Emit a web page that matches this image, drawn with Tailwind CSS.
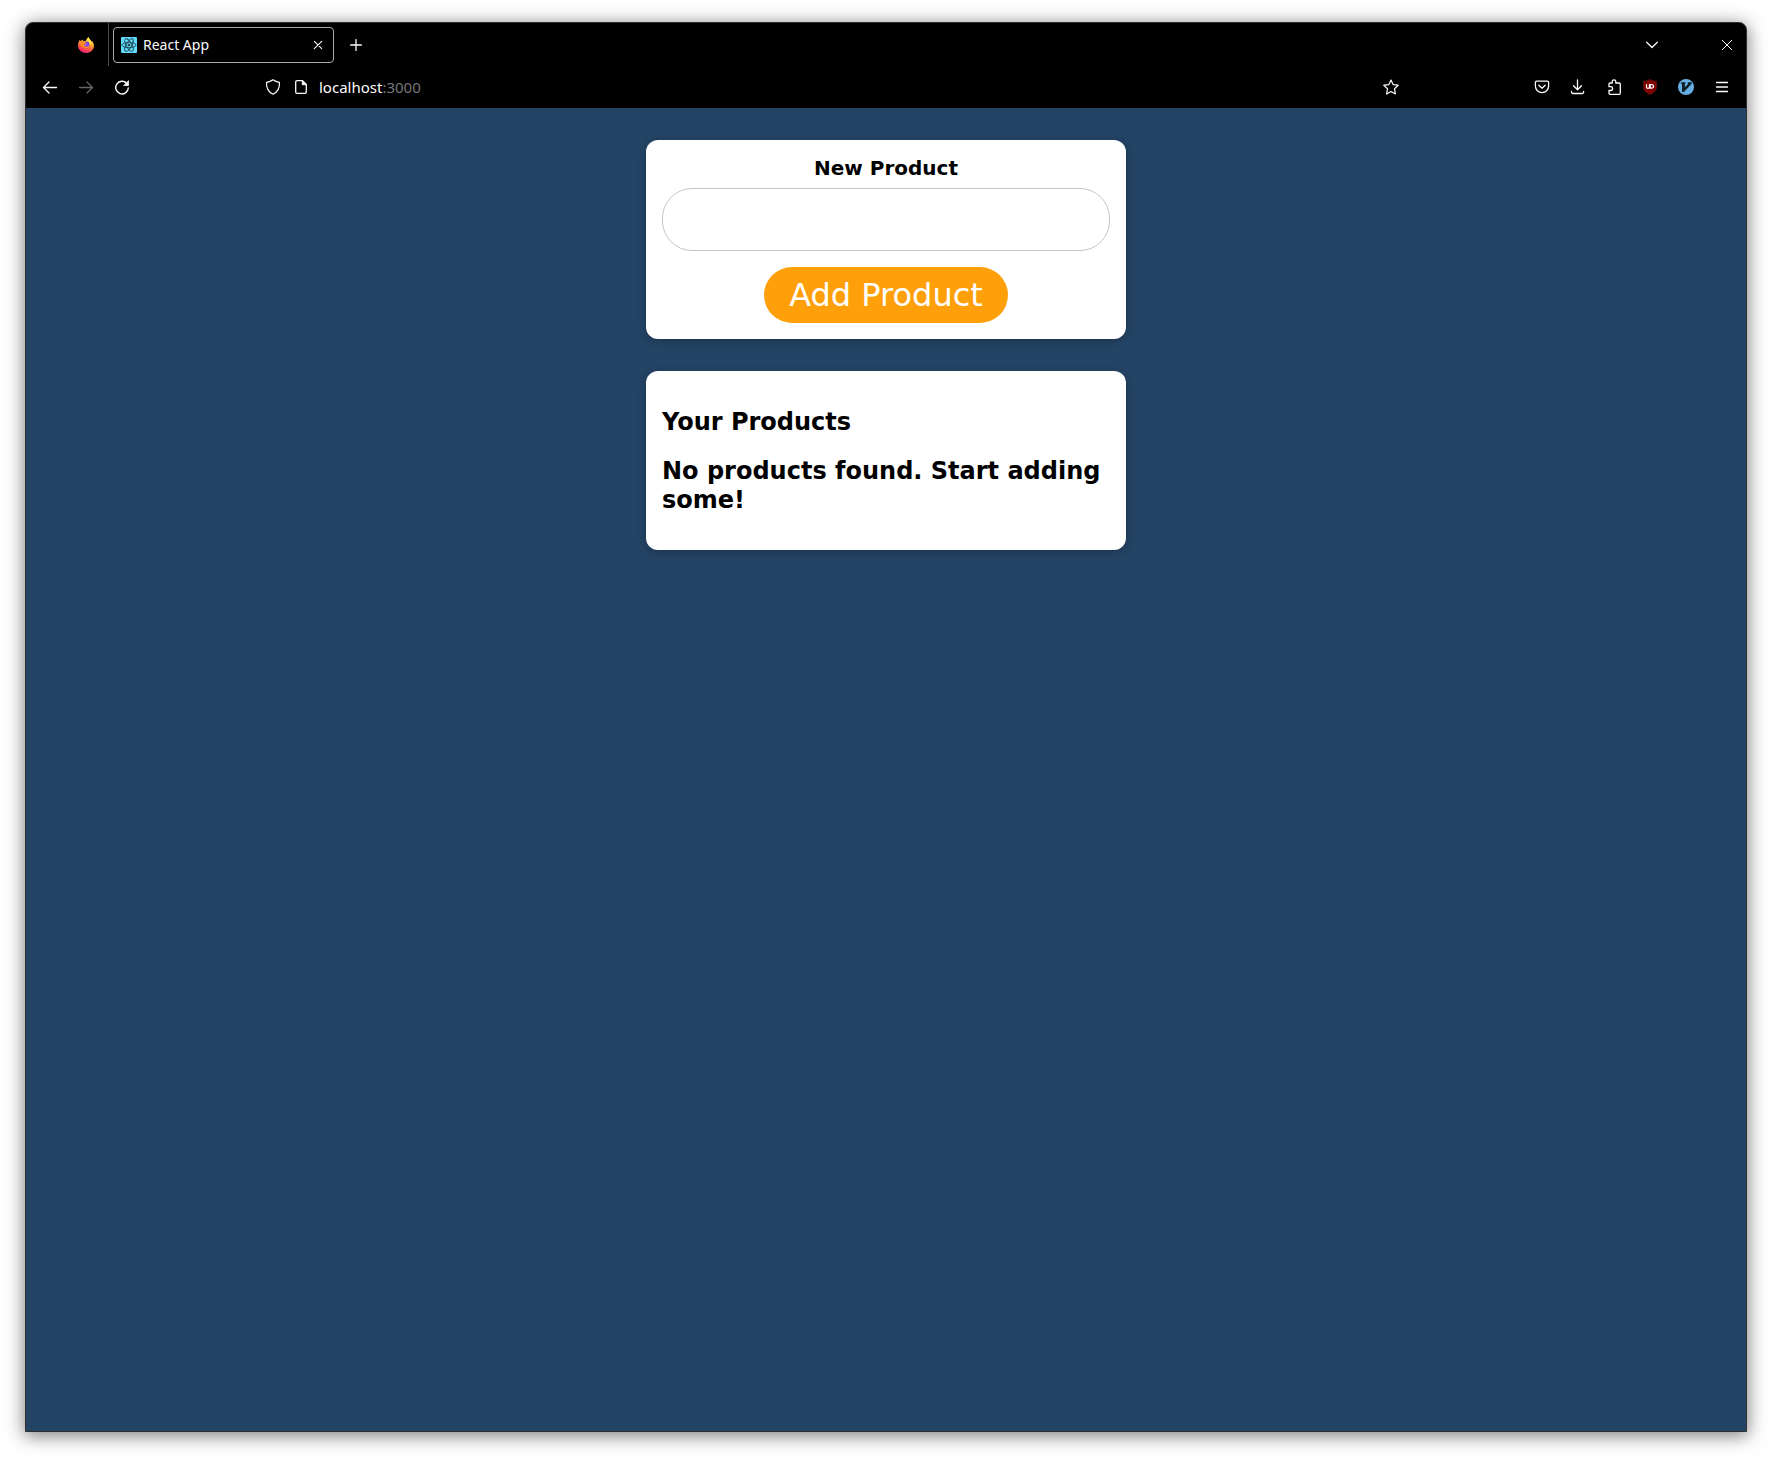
<!DOCTYPE html>
<html lang="en">
<head>
<meta charset="utf-8">
<meta name="viewport" content="width=device-width, initial-scale=1">
<title>React App</title>
<script src="https://cdn.jsdelivr.net/npm/@tailwindcss/browser@4"></script>
</head>
<body class="flex min-h-screen flex-col bg-white px-[25px] pt-[22px] pb-7 font-['Noto_Sans',sans-serif]">
<div class="flex flex-1 flex-col overflow-hidden rounded-t-lg border border-[#303030] bg-[#244465] shadow-[0_3px_18px_1px_rgba(0,0,0,0.5)]">

  <header class="bg-black text-[#fbfbfe]">
    <!-- Tab strip -->
    <div class="flex h-[43px] items-center">
      <button type="button" aria-label="Firefox View" class="flex h-full w-[83px] items-center justify-end border-r border-[#4a4a4a] pr-3.5">
        <svg class="size-4" viewBox="0 0 16 16">
          <defs>
            <linearGradient id="fire" x1="0.8" y1="0" x2="0.4" y2="1">
              <stop offset="0" stop-color="#fff44f"/><stop offset=".4" stop-color="#ffb030"/><stop offset=".7" stop-color="#ff5a3c"/><stop offset="1" stop-color="#e81a80"/>
            </linearGradient>
            <radialGradient id="globe"><stop offset="0" stop-color="#a05bff"/><stop offset="1" stop-color="#6a35d8"/></radialGradient>
          </defs>
          <path d="M1.800 3 3 4.300 4.400 2.600 5.500 4.200 8.200 3.500C8.400 2 9.300.8 10.600 0c.1 1.400 1 2.300 2.200 3.200l.6 1.200.5-.5c1.300 1.400 2.100 3 2.100 4.800C16 12.700 12.400 16 8 16S0 12.600 0 8.500C0 6.500.7 4.700 1.800 3z" fill="url(#fire)"/>
          <circle cx="8.200" cy="7.900" r="3.300" fill="url(#globe)"/>
          <path d="M1.400 5.300c1.500-1.500 4.200-1.300 5.400 0 .8.100 1.600.1 1.600.6-.1.800-1.700 1-2 1.900-.2 1.500 1 2.200 2.300 1.900 1.100-.2 1.700-1 2.900-.4-.8 1.800-3.600 2.700-5.800 1.400C3.100 10 3.200 8 1.400 5.300z" fill="#ff8a25"/>
          <path d="M8.600 3.700c2.300.5 3.500 2.300 3.200 4.500 1.200-.9 1.700-2.600.9-4.300L10.600.3z" fill="#ffe14a"/>
        </svg>
      </button>
      <div class="ml-1 flex h-9 w-[221px] items-center rounded-sm border border-[#a9a9ae] pr-[5px] pl-[7px]">
        <svg class="size-4 shrink-0" viewBox="0 0 16 16" fill="none" stroke="#1d4350" stroke-width=".9">
          <rect width="16" height="16" rx="1" fill="#61dafb" stroke="none"/>
          <ellipse cx="8" cy="8" rx="7" ry="2.700"/>
          <ellipse cx="8" cy="8" rx="7" ry="2.700" transform="rotate(60 8 8)"/>
          <ellipse cx="8" cy="8" rx="7" ry="2.700" transform="rotate(120 8 8)"/>
          <circle cx="8" cy="8" r="1.300" fill="#1d4350" stroke="none"/>
        </svg>
        <span class="ml-1.5 flex-1 text-sm">React App</span>
        <button type="button" aria-label="Close tab" class="flex size-5 items-center justify-center">
          <svg class="size-2.5" viewBox="0 0 10 10" stroke="currentColor" stroke-linecap="round" stroke-width="1.100"><path d="m1.300 1.300 7.400 7.400M8.700 1.300 1.300 8.700"/></svg>
        </button>
      </div>
      <button type="button" aria-label="New tab" class="ml-1 flex h-9 w-9 items-center justify-center">
        <svg class="size-3" viewBox="0 0 12 12" stroke="currentColor" stroke-linecap="round" stroke-width="1.300"><path d="M6 .6v10.800M.6 6h10.800"/></svg>
      </button>
      <div class="flex-1"></div>
      <button type="button" aria-label="List all tabs" class="mr-[38px] flex h-9 w-9 items-center justify-center">
        <svg class="size-3" viewBox="0 0 12 12" fill="none" stroke="currentColor" stroke-linecap="round" stroke-linejoin="round" stroke-width="1.300"><path d="m.7 3.200 5.300 5.300 5.300-5.300"/></svg>
      </button>
      <button type="button" aria-label="Close window" class="flex h-9 w-[38px] items-center justify-center">
        <svg class="size-2.5" viewBox="0 0 10 10" stroke="currentColor" stroke-width="1"><path d="m0 0 10 10M10 0 0 10"/></svg>
      </button>
    </div>

    <!-- Navigation toolbar -->
    <nav class="flex h-[42px] items-center px-1.5">
      <button type="button" aria-label="Back" class="flex h-9 w-9 items-center justify-center">
        <svg class="size-4" viewBox="0 0 16 16" fill="none" stroke="currentColor" stroke-width="1.300" stroke-linecap="round" stroke-linejoin="round"><path d="M14.500 8.500h-13M7 3 1.500 8.500 7 14"/></svg>
      </button>
      <button type="button" aria-label="Forward" disabled class="flex h-9 w-9 items-center justify-center text-[#66666a]">
        <svg class="size-4" viewBox="0 0 16 16" fill="none" stroke="currentColor" stroke-width="1.300" stroke-linecap="round" stroke-linejoin="round"><path d="M1.500 8.500h13M9 3l5.500 5.500L9 14"/></svg>
      </button>
      <button type="button" aria-label="Reload" class="flex h-9 w-9 items-center justify-center">
        <svg class="size-4" viewBox="0 0 16 16" fill="none" stroke="currentColor" stroke-width="1.400" stroke-linecap="round" stroke-linejoin="round"><path d="M12.800 4.500A6.300 6.300 0 1 0 14.300 9"/><path d="M14.500 2v4.500H10z" fill="currentColor" stroke-width=".8"/></svg>
      </button>

      <div class="mx-[119px] flex flex-1 items-center">
        <button type="button" aria-label="Tracking protection" class="flex h-7 w-7 items-center justify-center">
          <svg class="size-4" viewBox="0 0 16 16" fill="none" stroke="currentColor" stroke-width="1.200" stroke-linejoin="round"><path d="M8 .8c1.900 1.400 3.800 2.100 6.400 2.500.5 5.200-1.200 9.400-6.400 12C2.800 12.700 1.100 8.500 1.600 3.300 4.200 2.900 6.100 2.200 8 .8z"/></svg>
        </button>
        <button type="button" aria-label="Site information" class="flex h-7 w-7 items-center justify-center">
          <svg class="size-4" viewBox="0 0 16 16" fill="none" stroke="currentColor" stroke-width="1.300" stroke-linejoin="round"><path d="M9.500 1.700H4a1.300 1.300 0 0 0-1.300 1.300v10A1.300 1.300 0 0 0 4 14.300h8a1.300 1.300 0 0 0 1.300-1.300V5.500z"/><path d="M9.300 1.700v4h4z" fill="currentColor" stroke-width="1"/></svg>
        </button>
        <a href="http://localhost:3000" class="ml-1 flex-1 text-[15px] leading-5">localhost<span class="text-[#76767a]">:3000</span></a>
        <button type="button" aria-label="Bookmark this page" class="flex h-7 w-7 items-center justify-center">
          <svg class="size-4" viewBox="0 0 16 16" fill="none" stroke="currentColor" stroke-width="1.200" stroke-linejoin="round"><path d="m8 1 2.100 4.600 5.100.6-3.700 3.500.9 5.300L8 12.400 3.600 15l.9-5.300L.8 6.200l5.100-.6z"/></svg>
        </button>
      </div>

      <button type="button" aria-label="Save to Pocket" class="flex h-9 w-9 items-center justify-center">
        <svg class="size-4" viewBox="0 0 16 16" fill="none" stroke="currentColor" stroke-width="1.300" stroke-linecap="round" stroke-linejoin="round"><path d="M2.700 2.200h10.600a1.300 1.300 0 0 1 1.300 1.300v3.600a6.600 6.600 0 0 1-13.200 0V3.500a1.300 1.300 0 0 1 1.300-1.300z"/><path d="M4.800 6.300 8 9.300l3.200-3"/></svg>
      </button>
      <button type="button" aria-label="Downloads" class="flex h-9 w-9 items-center justify-center">
        <svg class="size-4" viewBox="0 0 16 16" fill="none" stroke="currentColor" stroke-width="1.300" stroke-linecap="round" stroke-linejoin="round"><path d="M7.500.8v9.700M3.500 6.700l4 4 4-4M1.500 12.300v.8a1.400 1.400 0 0 0 1.400 1.400h9.300a1.400 1.400 0 0 0 1.400-1.400v-.8"/></svg>
      </button>
      <button type="button" aria-label="Extensions" class="flex h-9 w-9 items-center justify-center">
        <svg class="size-4" viewBox="0 0 16 16" fill="none" stroke="currentColor" stroke-width="1.300" stroke-linejoin="round"><path d="M3 7.700V5a1 1 0 0 1 1-1h2.200V2.600a1.800 1.800 0 0 1 3.600 0V4h3.500a1 1 0 0 1 1 1v9.300a1 1 0 0 1-1 1H4a1 1 0 0 1-1-1v-2.800h1.700a1.900 1.900 0 0 0 0-3.800z"/></svg>
      </button>
      <button type="button" aria-label="uBlock Origin" class="flex h-9 w-9 items-center justify-center">
        <svg class="size-4" viewBox="0 0 16 16" fill="none"><path d="M8 .3c2 1.300 4 1.800 6.700 2v5.200c0 4-2.900 6.300-6.700 8.200-3.800-1.900-6.700-4.200-6.700-8.200V2.300C4 2.100 6 1.600 8 .3z" fill="#800000" stroke="#5a1a1a" stroke-width=".6"/><path d="M4.500 5.300v2.700a1.400 1.400 0 0 0 2.900 0V5.300m0 2v2.100M8.300 5.700h1.500a1.750 1.750 0 0 1 0 3.500H8.300z" stroke="#fff" stroke-width="1.200"/></svg>
      </button>
      <button type="button" aria-label="Vimium" class="flex h-9 w-9 items-center justify-center">
        <svg class="size-4" viewBox="0 0 16 16"><circle cx="8" cy="8" r="8" fill="#66aee3"/><path d="M2.800 3.200h4.700v1.200l-.6.400v3.500l3.400-3.500-.6-.4V3.200h4v1.500L5.900 12.900H4V4.800l-1.200-.4z" fill="#10202b"/></svg>
      </button>
      <button type="button" aria-label="Open application menu" class="flex h-9 w-9 items-center justify-center">
        <svg class="size-4" viewBox="0 0 16 16" stroke="currentColor" stroke-width="1.300" stroke-linecap="round"><path d="M2.500 3.500h11M2.500 8h11M2.500 12.500h11"/></svg>
      </button>
    </nav>
  </header>

  <!-- Page -->
  <main class="mx-auto flex w-full max-w-[480px] flex-1 flex-col gap-8 py-8 font-['DejaVu_Sans',sans-serif] text-black">
    <form class="flex flex-col items-center rounded-xl bg-white p-4 shadow-[0_2px_8px_rgba(0,0,0,0.26)]">
      <label for="product" class="mb-2 text-xl leading-6 font-bold">New Product</label>
      <input id="product" type="text" class="mb-4 h-[63px] w-full rounded-[30px] border border-[#c4c4c4] px-4 text-[32px]">
      <button type="button" class="h-14 rounded-full bg-[#ffa00a] px-[25px] text-[32px] leading-10 text-white">Add Product</button>
    </form>
    <section class="flex flex-col gap-5 rounded-xl bg-white px-4 pt-[37px] pb-[35px] text-2xl leading-[29px] font-bold shadow-[0_2px_8px_rgba(0,0,0,0.26)]">
      <h2>Your Products</h2>
      <h2>No products found. Start adding some!</h2>
    </section>
  </main>
</div>
</body>
</html>
